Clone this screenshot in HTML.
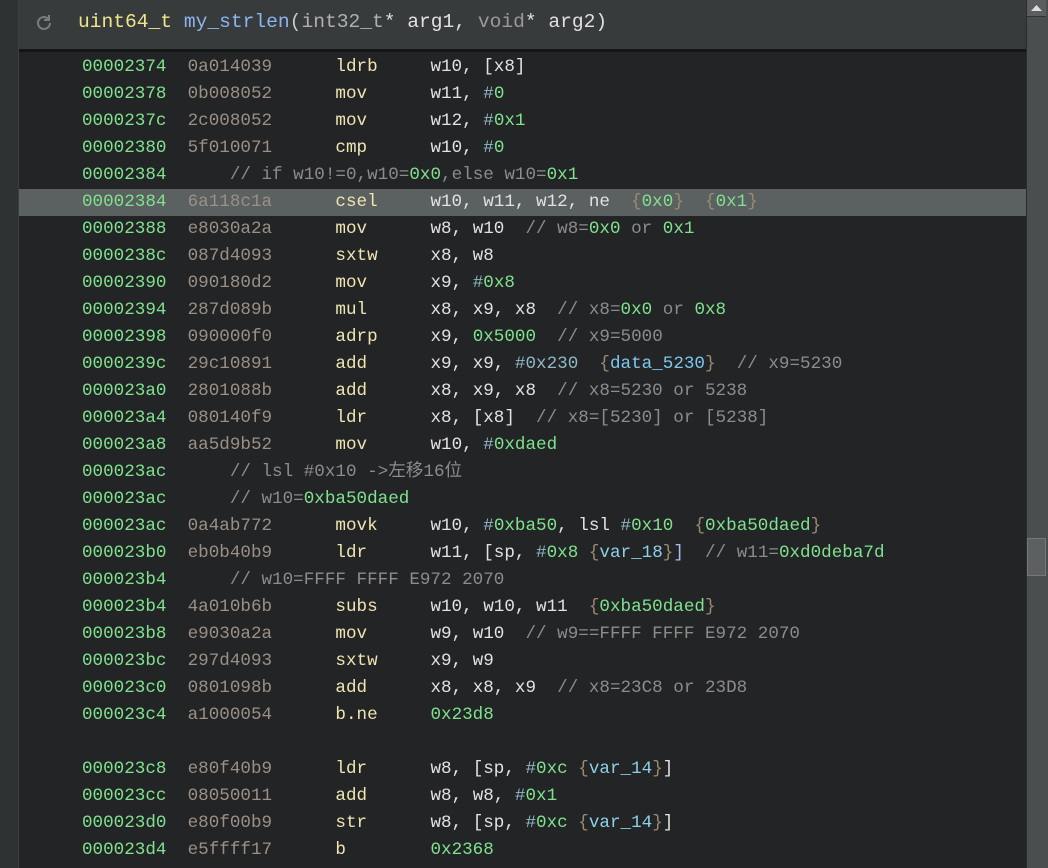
<!DOCTYPE html>
<html><head><meta charset="utf-8"><style>
html,body{margin:0;padding:0;width:1048px;height:868px;overflow:hidden;background:#232425;}
body{position:relative;font-family:"Liberation Mono","DejaVu Sans Mono","Noto Sans CJK SC",monospace;font-size:17.6px;}
#side{position:absolute;left:0;top:0;width:18px;height:868px;background:#2f3233;border-right:1px solid #3c3f40;}
#hdr{position:absolute;left:19px;top:0;width:1007px;height:49px;background:#383b3c;border-bottom:3px solid #141515;}
#title{position:absolute;left:59px;top:9px;line-height:26px;white-space:pre;color:#c8c8c8;font-size:19.6px;}
#sb{position:absolute;left:1026px;top:0;width:22px;height:868px;background:#4a4e4f;border-left:1px solid #2a2c2d;}
#thumb{position:absolute;left:1027px;top:538px;width:19px;height:38px;background:#5c6061;border:1px solid #777;box-sizing:border-box;}
#up{position:absolute;left:1027px;top:0;width:19px;height:16px;background:#5a5e5f;border-bottom:1px solid #333;}
#rows{position:absolute;left:19px;top:54px;width:1007px;}
.r{height:27px;line-height:27px;white-space:pre;padding-left:63px;color:#e2e2e2;}
.hl{background:#5b6060;}
.a{color:#7fe28e}.b{color:#9a9086}.m{color:#efe5b2}.c{color:#8c8c8c}.n{color:#7fe28e}.h{color:#8fb8c8}.br{color:#9a8a70}.d{color:#7cc8f0}.v{color:#8fd0e8}.k{color:#a8c0e8}
</style></head><body>
<div id="side"></div>
<div id="hdr"><svg style="position:absolute;left:15px;top:13px" width="20" height="20" viewBox="0 0 20 20"><path d="M16 10a6 6 0 1 1-2-4.5" fill="none" stroke="#7a7d7e" stroke-width="2"/><path d="M15 2v5h-5" fill="none" stroke="#7a7d7e" stroke-width="2"/></svg>
<div id="title"><span style="color:#efe58a">uint64_t</span> <span style="color:#8cb4f0">my_strlen</span>(<span style="color:#b0b0b0">int32_t</span><span style="color:#e0e0e0">* arg1, </span><span style="color:#9a9a9a">void</span><span style="color:#e0e0e0">* arg2)</span></div></div>
<div id="sb"></div><div id="up"><svg width="19" height="16"><path d="M4 11h11l-5.5-6z" fill="#ddd"/></svg></div><div id="thumb"></div>
<div id="rows">
<div class="r"><span class="a">00002374</span>  <span class="b">0a014039</span>      <span class="m">ldrb</span>     w10, [x8]</div>
<div class="r"><span class="a">00002378</span>  <span class="b">0b008052</span>      <span class="m">mov</span>      w11, <span class="h">#</span><span class="n">0</span></div>
<div class="r"><span class="a">0000237c</span>  <span class="b">2c008052</span>      <span class="m">mov</span>      w12, <span class="h">#</span><span class="n">0x1</span></div>
<div class="r"><span class="a">00002380</span>  <span class="b">5f010071</span>      <span class="m">cmp</span>      w10, <span class="h">#</span><span class="n">0</span></div>
<div class="r"><span class="a">00002384</span>      <span class="c">// if w10!=0,w10=</span><span class="n">0x0</span><span class="c">,else w10=</span><span class="n">0x1</span></div>
<div class="r hl"><span class="a">00002384</span>  <span class="b">6a118c1a</span>      <span class="m">csel</span>     w10, w11, w12, ne  <span class="br">{</span><span class="n">0x0</span><span class="br">}</span>  <span class="br">{</span><span class="n">0x1</span><span class="br">}</span></div>
<div class="r"><span class="a">00002388</span>  <span class="b">e8030a2a</span>      <span class="m">mov</span>      w8, w10  <span class="c">// w8=</span><span class="n">0x0</span><span class="c"> or </span><span class="n">0x1</span></div>
<div class="r"><span class="a">0000238c</span>  <span class="b">087d4093</span>      <span class="m">sxtw</span>     x8, w8</div>
<div class="r"><span class="a">00002390</span>  <span class="b">090180d2</span>      <span class="m">mov</span>      x9, <span class="h">#</span><span class="n">0x8</span></div>
<div class="r"><span class="a">00002394</span>  <span class="b">287d089b</span>      <span class="m">mul</span>      x8, x9, x8  <span class="c">// x8=</span><span class="n">0x0</span><span class="c"> or </span><span class="n">0x8</span></div>
<div class="r"><span class="a">00002398</span>  <span class="b">090000f0</span>      <span class="m">adrp</span>     x9, <span class="n">0x5000</span>  <span class="c">// x9=5000</span></div>
<div class="r"><span class="a">0000239c</span>  <span class="b">29c10891</span>      <span class="m">add</span>      x9, x9, <span class="h">#0x230</span>  <span class="br">{</span><span class="d">data_5230</span><span class="br">}</span>  <span class="c">// x9=5230</span></div>
<div class="r"><span class="a">000023a0</span>  <span class="b">2801088b</span>      <span class="m">add</span>      x8, x9, x8  <span class="c">// x8=5230 or 5238</span></div>
<div class="r"><span class="a">000023a4</span>  <span class="b">080140f9</span>      <span class="m">ldr</span>      x8, [x8]  <span class="c">// x8=[5230] or [5238]</span></div>
<div class="r"><span class="a">000023a8</span>  <span class="b">aa5d9b52</span>      <span class="m">mov</span>      w10, <span class="h">#</span><span class="n">0xdaed</span></div>
<div class="r"><span class="a">000023ac</span>      <span class="c">// lsl #0x10 -&gt;左移16位</span></div>
<div class="r"><span class="a">000023ac</span>      <span class="c">// w10=</span><span class="n">0xba50daed</span></div>
<div class="r"><span class="a">000023ac</span>  <span class="b">0a4ab772</span>      <span class="m">movk</span>     w10, <span class="h">#</span><span class="n">0xba50</span>, lsl <span class="h">#</span><span class="n">0x10</span>  <span class="br">{</span><span class="n">0xba50daed</span><span class="br">}</span></div>
<div class="r"><span class="a">000023b0</span>  <span class="b">eb0b40b9</span>      <span class="m">ldr</span>      w11, [sp, <span class="h">#</span><span class="n">0x8</span> <span class="br">{</span><span class="v">var_18</span><span class="br">}</span><span class="k">]</span>  <span class="c">// w11=</span><span class="n">0xd0deba7d</span></div>
<div class="r"><span class="a">000023b4</span>      <span class="c">// w10=FFFF FFFF E972 2070</span></div>
<div class="r"><span class="a">000023b4</span>  <span class="b">4a010b6b</span>      <span class="m">subs</span>     w10, w10, w11  <span class="br">{</span><span class="n">0xba50daed</span><span class="br">}</span></div>
<div class="r"><span class="a">000023b8</span>  <span class="b">e9030a2a</span>      <span class="m">mov</span>      w9, w10  <span class="c">// w9==FFFF FFFF E972 2070</span></div>
<div class="r"><span class="a">000023bc</span>  <span class="b">297d4093</span>      <span class="m">sxtw</span>     x9, w9</div>
<div class="r"><span class="a">000023c0</span>  <span class="b">0801098b</span>      <span class="m">add</span>      x8, x8, x9  <span class="c">// x8=23C8 or 23D8</span></div>
<div class="r"><span class="a">000023c4</span>  <span class="b">a1000054</span>      <span class="m">b.ne</span>     <span class="n">0x23d8</span></div>
<div class="r"> </div>
<div class="r"><span class="a">000023c8</span>  <span class="b">e80f40b9</span>      <span class="m">ldr</span>      w8, [sp, <span class="h">#</span><span class="n">0xc</span> <span class="br">{</span><span class="v">var_14</span><span class="br">}</span>]</div>
<div class="r"><span class="a">000023cc</span>  <span class="b">08050011</span>      <span class="m">add</span>      w8, w8, <span class="h">#</span><span class="n">0x1</span></div>
<div class="r"><span class="a">000023d0</span>  <span class="b">e80f00b9</span>      <span class="m">str</span>      w8, [sp, <span class="h">#</span><span class="n">0xc</span> <span class="br">{</span><span class="v">var_14</span><span class="br">}</span>]</div>
<div class="r"><span class="a">000023d4</span>  <span class="b">e5ffff17</span>      <span class="m">b</span>        <span class="n">0x2368</span></div>
</div>
</body></html>
